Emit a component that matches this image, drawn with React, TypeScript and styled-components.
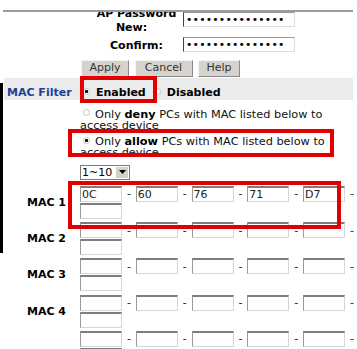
import React from 'react';
import styled, { createGlobalStyle } from 'styled-components';

const Global = createGlobalStyle`
  html, body { margin: 0; padding: 0; background: #fff; }
  body {
    font-family: "DejaVu Sans", Verdana, sans-serif;
    font-size: 11px;
    color: #000;
  }
  #root { width: 357px; height: 349px; overflow: hidden; }
`;

const Page = styled.div`
  position: relative;
  display: flex;
  width: 357px;
  height: 349px;
  overflow: hidden;
  background: #fff;
`;

const Gutter = styled.div`
  flex: none;
  width: 3px;
`;

const EdgeBar = styled.div`
  margin-top: 83px;
  height: 170px;
  background: #000;
`;

const Main = styled.div`
  flex: 1;
  min-width: 0;
  margin-right: 4px;
  display: flex;
  flex-direction: column;
  & > * { flex-shrink: 0; }
`;

const TopRule = styled.div`
  height: 10px;
  border-bottom: 2px solid #9c9c9c;
`;

const TopForm = styled.div`
  overflow: hidden;
`;

const FormRow = styled.div<{ $h: number }>`
  display: grid;
  grid-template-columns: 89px 112px;
  column-gap: 2px;
  margin-left: 89px;
  height: ${(p) => p.$h}px;
  align-items: start;
`;

const FormLabel = styled.div<{ $top: number }>`
  margin-top: ${(p) => p.$top}px;
  text-align: center;
  font-weight: bold;
  line-height: 14px;
  white-space: nowrap;
`;

const Nudge = styled.span`
  margin-right: 10px;
`;

const PasswordInput = styled.input`
  box-sizing: border-box;
  width: 112px;
  height: 15px;
  margin: 0;
  padding: 0 2px;
  border: 1px solid;
  border-color: #9a9a9a #dcdcdc #dcdcdc #444;
  font-family: "DejaVu Sans", Verdana, sans-serif;
  font-size: 10.8px;
  letter-spacing: 0.2px;
  color: #000;
  background: #fff;
  outline: none;
`;

const ButtonRow = styled.div`
  display: flex;
  gap: 5.5px;
  margin: 0 0 0 78px;
  height: 17px;
`;

const Button = styled.button<{ $w: number }>`
  box-sizing: border-box;
  width: ${(p) => p.$w}px;
  height: 17px;
  margin: 0;
  padding: 0 0 2px;
  border: 1px solid;
  border-color: #f4f4f4 #8a8a8a #8a8a8a #f4f4f4;
  background: #d6d3cd;
  font-family: "DejaVu Sans", Verdana, sans-serif;
  font-size: 11px;
  color: #333;
  line-height: 13px;
`;

const FilterBar = styled.div`
  display: grid;
  grid-template-columns: 76px 1fr;
  margin: 1px 0 0 1px;
  height: 22px;
  box-sizing: border-box;
  padding-top: 8px;
  line-height: 14px;
  background: #ebebeb;
  font-weight: bold;
  white-space: nowrap;
`;

const FilterTitle = styled.div`
  padding-left: 3px;
  color: #213f94;
`;

const Radio = styled.span<{ $checked?: boolean; $after: number }>`
  display: inline-block;
  box-sizing: border-box;
  width: 7px;
  height: 7px;
  margin: 0 ${(p) => p.$after}px 0 3px;
  border-radius: 50%;
  border: 1px solid #c4c4c4;
  background: ${(p) =>
    p.$checked
      ? 'radial-gradient(circle, #1a1a1a 0 1.4px, #fff 1.7px)'
      : '#fff'};
  vertical-align: 1.5px;
`;

const FilterChoices = styled.div`
  display: flex;
  align-items: baseline;
`;

const Choice = styled.span<{ $gap?: number }>`
  margin-left: ${(p) => p.$gap ?? 0}px;
`;

const Options = styled.div`
  margin-left: 77px;
  font-size: 11.3px;
  line-height: 11px;
  color: #111;
`;

const Option = styled.div<{ $top: number }>`
  margin-top: ${(p) => p.$top}px;
  b { font-weight: bold; color: #000; }
`;

const SelectBox = styled.div`
  display: flex;
  box-sizing: border-box;
  width: 50px;
  height: 15px;
  margin: 6.7px 0 0 77px;
  border: 1px solid #7a7a7a;
  background: #fff;
  font-size: 11px;
  line-height: 13px;
  color: #000;
`;

const SelectText = styled.span`
  flex: 1;
  padding-left: 1px;
`;

const SelectArrow = styled.span`
  width: 12px;
  margin: 1px;
  background: #d4d0c8;
  border-left: 1px solid #fff;
  display: flex;
  align-items: center;
  justify-content: center;
`;

const MacList = styled.div`
  margin-top: 4.4px;
  display: flex;
  flex-direction: column;
  & > * { flex-shrink: 0; }
`;

const MacRow = styled.div`
  display: grid;
  grid-template-columns: 77px 1fr;
  padding: 1.625px 0;
`;

const MacLabel = styled.div`
  align-self: center;
  padding-left: 24px;
  font-weight: bold;
  white-space: nowrap;
`;

const MacFields = styled.div`
  display: flex;
  flex-direction: column;
  gap: 1px;
`;

const MacLine = styled.div`
  display: flex;
  flex-wrap: nowrap;
  align-items: center;
  height: 16px;
`;

const Octet = styled.input`
  flex: none;
  box-sizing: border-box;
  width: 42px;
  height: 16px;
  margin: 0;
  padding: 0 1px;
  border: 1px solid;
  border-color: #7e7e7e #d6d6d6 #d6d6d6 #9a9a9a;
  border-top-width: 2px;
  font-family: "DejaVu Sans", Verdana, sans-serif;
  font-size: 11px;
  color: #222;
  background: #fff;
  outline: none;
`;

const Dash = styled.span`
  flex: none;
  width: 13.75px;
  text-align: center;
  font-size: 11px;
  color: #222;
`;

const Mark = styled.div<{ $x: number; $y: number; $w: number; $h: number }>`
  position: absolute;
  left: ${(p) => p.$x}px;
  top: ${(p) => p.$y}px;
  width: ${(p) => p.$w}px;
  height: ${(p) => p.$h}px;
  box-sizing: border-box;
  border: 4px solid #e10000;
  pointer-events: none;
`;

const macs: { label: string; values: string[] }[] = [
  { label: 'MAC 1', values: ['0C', '60', '76', '71', 'D7', ''] },
  { label: 'MAC 2', values: ['', '', '', '', '', ''] },
  { label: 'MAC 3', values: ['', '', '', '', '', ''] },
  { label: 'MAC 4', values: ['', '', '', '', '', ''] },
  { label: '', values: ['', '', '', '', '', ''] },
];

function MacEntry({ label, values }: { label: string; values: string[] }) {
  return (
    <MacRow>
      <MacLabel>{label}</MacLabel>
      <MacFields>
        <MacLine>
          {values.slice(0, 5).map((v, i) => (
            <React.Fragment key={i}>
              <Octet readOnly value={v} />
              <Dash>-</Dash>
            </React.Fragment>
          ))}
        </MacLine>
        <MacLine>
          <Octet readOnly value={values[5]} />
        </MacLine>
      </MacFields>
    </MacRow>
  );
}

export default function App() {
  return (
    <>
      <Global />
      <Page>
        <Gutter>
          <EdgeBar />
        </Gutter>
        <Main>
          <TopRule />
          <TopForm>
            <FormRow $h={25}>
              <FormLabel $top={-5.3}>
                AP Password
                <br />
                <Nudge>New:</Nudge>
              </FormLabel>
              <PasswordInput type="password" readOnly value="abcdefghijklmno" />
            </FormRow>
            <FormRow $h={23}>
              <FormLabel $top={2}>Confirm:</FormLabel>
              <PasswordInput type="password" readOnly value="abcdefghijklmno" />
            </FormRow>
          </TopForm>
          <ButtonRow>
            <Button $w={48}>Apply</Button>
            <Button $w={58}>Cancel</Button>
            <Button $w={42}>Help</Button>
          </ButtonRow>
          <FilterBar>
            <FilterTitle>MAC Filter</FilterTitle>
            <FilterChoices>
              <Choice>
                <Radio $checked $after={6} />
                Enabled
              </Choice>
              <Choice $gap={5}>
                <Radio $after={6} />
                Disabled
              </Choice>
            </FilterChoices>
          </FilterBar>
          <Options>
            <Option $top={8.9}>
              <Radio $after={5} />
              Only <b>deny</b> PCs with MAC listed below to access device
            </Option>
            <Option $top={5.4}>
              <Radio $checked $after={5} />
              Only <b>allow</b> PCs with MAC listed below to access device
            </Option>
          </Options>
          <SelectBox>
            <SelectText>1~10</SelectText>
            <SelectArrow>
              <svg width="7" height="4" viewBox="0 0 7 4">
                <path d="M0 0h7L3.5 4z" fill="#000" />
              </svg>
            </SelectArrow>
          </SelectBox>
          <MacList>
            {macs.map((m, i) => (
              <MacEntry key={i} label={m.label} values={m.values} />
            ))}
          </MacList>
        </Main>
        <Mark $x={80} $y={76} $w={77} $h={27} />
        <Mark $x={68} $y={129} $w={266} $h={28} />
        <Mark $x={68} $y={181} $w={273} $h={48} />
      </Page>
    </>
  );
}
